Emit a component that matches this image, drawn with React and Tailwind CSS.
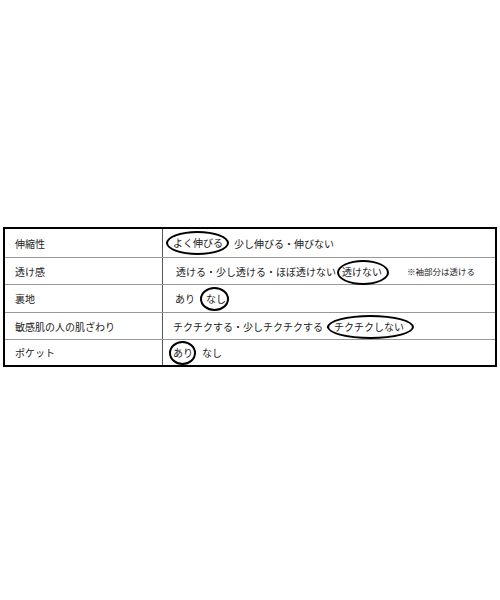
export default function App() {
  const font = { fontFamily: '"Noto Sans CJK JP", "Noto Sans", sans-serif' };
  const Circ = ({ children, l, r, t = 5, b = 5 }) => (
    <span className="relative inline-block leading-[14px]">
      {children}
      <span
        className="absolute rounded-[50%] border-2 border-black"
        style={{ left: -l, right: -r, top: -t, bottom: -b }}
      />
    </span>
  );
  const rows = [
    {
      label: "伸縮性",
      h: "h-[28px]",
      content: (
        <div className="pl-[10px] flex items-center">
          <Circ l={7} r={6} t={5} b={5}>よく伸びる</Circ>
          <span className="ml-[11px]">少し伸びる・伸びない</span>
        </div>
      ),
    },
    {
      label: "透け感",
      h: "h-[27px]",
      content: (
        <div className="pl-[13px] flex items-center">
          <span>透ける・少し透ける・ほぼ透けない</span>
          <span className="ml-[6px]">
            <Circ l={5} r={7} t={5} b={6}>透けない</Circ>
          </span>
          <span className="ml-[25px] text-[8.5px]">※袖部分は透ける</span>
        </div>
      ),
    },
    {
      label: "裏地",
      h: "h-[28px]",
      content: (
        <div className="pl-[12px] flex items-center">
          <span>あり</span>
          <span className="ml-[11px]">
            <Circ l={6} r={3} t={5} b={5}>なし</Circ>
          </span>
        </div>
      ),
    },
    {
      label: "敏感肌の人の肌ざわり",
      h: "h-[27px]",
      content: (
        <div className="pl-[10px] flex items-center">
          <span>チクチクする・少しチクチクする・</span>
          <span className="ml-[1px]">
            <Circ l={7} r={10} t={5} b={5}>チクチクしない</Circ>
          </span>
        </div>
      ),
    },
    {
      label: "ポケット",
      h: "h-[26px]",
      content: (
        <div className="pl-[10px] flex items-center">
          <Circ l={4} r={3} t={5} b={5}>あり</Circ>
          <span className="ml-[9px]">なし</span>
        </div>
      ),
    },
  ];
  return (
    <div className="w-[500px] h-[600px] bg-white text-[#222] text-[10px]" style={font}>
      <div className="h-[227px]" />
      <div className="ml-[3px] w-[494px] border-2 border-black">
        {rows.map((r, i) => (
          <div
            key={i}
            className={`grid grid-cols-[157px_1px_1fr] ${r.h} ${i > 0 ? "border-t border-[#999]" : ""}`}
          >
            <div className="flex items-center pl-[10px]">{r.label}</div>
            <div className="bg-[#555]" />
            {r.content}
          </div>
        ))}
      </div>
    </div>
  );
}
